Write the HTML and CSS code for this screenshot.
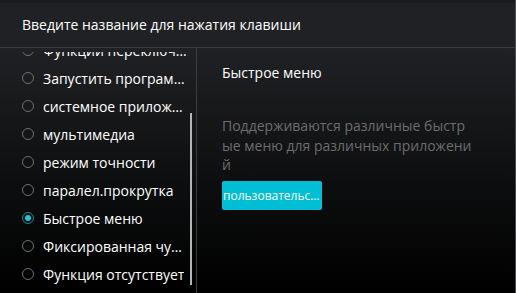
FILE: index.html
```html
<!DOCTYPE html>
<html lang="ru">
<head>
  <meta charset="UTF-8" />
  <title>Быстрое меню</title>
  <link rel="stylesheet" href="styles.css">
</head>
<body>
  <div class="window">
    <header class="title">Введите название для нажатия клавиши</header>

    <div class="main">
      <div class="side">
        <div class="viewport">
          <ul class="list">
            <li class="item"><span class="radio"></span><span class="label">Функции переключения</span></li>
            <li class="item"><span class="radio"></span><span class="label">Запустить программу</span></li>
            <li class="item"><span class="radio"></span><span class="label">системное приложение</span></li>
            <li class="item"><span class="radio"></span><span class="label">мультимедиа</span></li>
            <li class="item"><span class="radio"></span><span class="label">режим точности</span></li>
            <li class="item"><span class="radio"></span><span class="label">паралел.прокрутка</span></li>
            <li class="item active"><span class="radio"></span><span class="label">Быстрое меню</span></li>
            <li class="item"><span class="radio"></span><span class="label">Фиксированная чувствительность</span></li>
            <li class="item"><span class="radio"></span><span class="label">Функция отсутствует</span></li>
          </ul>
        </div>
        <div class="scrollbar"></div>
      </div>

      <div class="panel">
        <h2 class="panel-title">Быстрое меню</h2>
        <p class="desc">Поддерживаются различные быстрые меню для различных приложений</p>
        <button class="btn">пользовательское меню</button>
      </div>
    </div>
  </div>
</body>
</html>
```

FILE: styles.css
```css
html, body {
  margin: 0;
  padding: 0;
  background: #000;
}

.window {
  width: 516px;
  height: 293px;
  box-sizing: border-box;
  border-right: 1px solid #4a4b4d;
  display: flex;
  flex-direction: column;
  font-family: 'Open Sans', 'Noto Sans', sans-serif;
  color: #fff;
  overflow: hidden;
}

.title {
  border-top: 3px solid #1a1b1d;
  border-bottom: 1px solid #3c3d3f;
  background: #202124;
  padding-left: 22px;
  font-size: 14px;
  line-height: 44px;
  height: 44px;
}

.main {
  flex: 1;
  display: flex;
  background: linear-gradient(to bottom, #202124 0%, #0d0e0f 55%, #000 100%);
}

.side {
  width: 196px;
  border-right: 1px solid #3c3d3f;
  position: relative;
  display: flex;
  flex-direction: column;
}

.viewport {
  flex: 1;
  margin-top: 4px;
  overflow: hidden;
}

.list {
  list-style: none;
  margin: -16px 0 0 0;
  padding: 0;
}

.item {
  height: 28px;
  display: flex;
  align-items: center;
  padding-left: 22px;
  font-size: 14px;
}

.radio {
  width: 10px;
  height: 10px;
  border: 1.5px solid #6e6f71;
  border-radius: 50%;
  flex: none;
  margin-right: 9px;
  position: relative;
}

.item.active .radio {
  border-color: #0f8fa0;
}

.item.active .radio::after {
  content: '';
  position: absolute;
  left: 2px;
  top: 2px;
  width: 6px;
  height: 6px;
  border-radius: 50%;
  background: #1ac8dc;
}

.label {
  white-space: nowrap;
  overflow: hidden;
  text-overflow: ellipsis;
  max-width: 146px;
}

.scrollbar {
  position: absolute;
  right: 4px;
  top: 65px;
  bottom: 8px;
  width: 2px;
  background: #b4b5b6;
}

.panel {
  flex: 1;
  padding: 16px 0 0 25px;
}

.panel-title {
  margin: 0;
  font-size: 14px;
  font-weight: normal;
  line-height: 18px;
}

.desc {
  margin: 34px 0 0 0;
  width: 252px;
  font-size: 14px;
  line-height: 19.5px;
  color: #6c6d6f;
  word-break: break-all;
}

.btn {
  margin-top: 6px;
  width: 100px;
  height: 29px;
  padding: 0 1px;
  border: none;
  border-radius: 2px;
  background: #00bfd5;
  color: #fff;
  font-family: 'Open Sans', 'Noto Sans', sans-serif;
  font-size: 12px;
  white-space: nowrap;
  overflow: hidden;
  text-overflow: ellipsis;
  display: block;
}
```
